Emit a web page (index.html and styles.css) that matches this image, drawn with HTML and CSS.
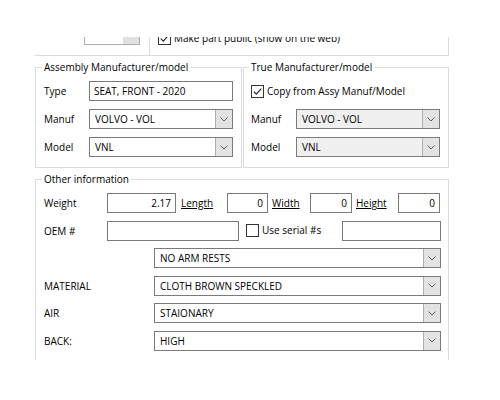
FILE: index.html
```html
<!DOCTYPE html>
<html lang="en">
<head>
    <meta charset="UTF-8">
    <meta name="viewport" content="width=device-width, initial-scale=1.0">
    <title>Part details</title>
    <link rel="stylesheet" href="styles.css">
</head>
<body>
<div class="window">

    <!-- Panel atas (terpotong oleh scroll) -->
    <div class="top-panel">
        <div class="top-left">
            <div class="spin"><span class="spin-btn"></span></div>
        </div>
        <div class="top-right">
            <div class="check">
                <span class="box"><svg width="11" height="11" viewBox="0 0 11 11"><path d="M1.8 5.6 L4.3 8.1 L9.3 2.6" fill="none" stroke="#222" stroke-width="1.1"/></svg></span>
                <span>Make part public (show on the web)</span>
            </div>
        </div>
    </div>

    <div class="groups">
        <fieldset class="group group-assy">
            <legend>Assembly Manufacturer/model</legend>
            <div class="rows">
                <div class="row">
                    <span class="lbl">Type</span>
                    <div class="text">SEAT, FRONT - 2020</div>
                </div>
                <div class="row">
                    <span class="lbl">Manuf</span>
                    <div class="combo"><span class="val">VOLVO - VOL</span><span class="drop"><svg width="8" height="5" viewBox="0 0 8 5"><path d="M0.5 0.5 L4 4 L7.5 0.5" fill="none" stroke="#606060"/></svg></span></div>
                </div>
                <div class="row">
                    <span class="lbl">Model</span>
                    <div class="combo"><span class="val">VNL</span><span class="drop"><svg width="8" height="5" viewBox="0 0 8 5"><path d="M0.5 0.5 L4 4 L7.5 0.5" fill="none" stroke="#606060"/></svg></span></div>
                </div>
            </div>
        </fieldset>

        <fieldset class="group group-true">
            <legend>True Manufacturer/model</legend>
            <div class="rows">
                <div class="row">
                    <div class="check">
                        <span class="box"><svg width="11" height="11" viewBox="0 0 11 11"><path d="M1.8 5.6 L4.3 8.1 L9.3 2.6" fill="none" stroke="#222" stroke-width="1.1"/></svg></span>
                        <span>Copy from Assy Manuf/Model</span>
                    </div>
                </div>
                <div class="row">
                    <span class="lbl">Manuf</span>
                    <div class="combo disabled"><span class="val">VOLVO - VOL</span><span class="drop"><svg width="8" height="5" viewBox="0 0 8 5"><path d="M0.5 0.5 L4 4 L7.5 0.5" fill="none" stroke="#606060"/></svg></span></div>
                </div>
                <div class="row">
                    <span class="lbl">Model</span>
                    <div class="combo disabled"><span class="val">VNL</span><span class="drop"><svg width="8" height="5" viewBox="0 0 8 5"><path d="M0.5 0.5 L4 4 L7.5 0.5" fill="none" stroke="#606060"/></svg></span></div>
                </div>
            </div>
        </fieldset>
    </div>

    <fieldset class="group group-other">
        <legend>Other information</legend>
        <div class="rows rows-other">
            <div class="row">
                <span class="lbl lbl-wide">Weight</span>
                <div class="text num w-weight">2.17</div>
                <span class="link l-length">Length</span>
                <div class="text num w-length">0</div>
                <span class="link l-width">Width</span>
                <div class="text num w-dim">0</div>
                <span class="link l-height">Height</span>
                <div class="text num w-dim">0</div>
            </div>
            <div class="row">
                <span class="lbl lbl-wide">OEM #</span>
                <div class="text w-oem"></div>
                <div class="check serial">
                    <span class="box"></span>
                    <span>Use serial #s</span>
                </div>
                <div class="text w-serial"></div>
            </div>
            <div class="row">
                <span class="lbl lbl-attr"></span>
                <div class="combo"><span class="val">NO ARM RESTS</span><span class="drop"><svg width="8" height="5" viewBox="0 0 8 5"><path d="M0.5 0.5 L4 4 L7.5 0.5" fill="none" stroke="#606060"/></svg></span></div>
            </div>
            <div class="row">
                <span class="lbl lbl-attr">MATERIAL</span>
                <div class="combo"><span class="val">CLOTH BROWN SPECKLED</span><span class="drop"><svg width="8" height="5" viewBox="0 0 8 5"><path d="M0.5 0.5 L4 4 L7.5 0.5" fill="none" stroke="#606060"/></svg></span></div>
            </div>
            <div class="row">
                <span class="lbl lbl-attr">AIR</span>
                <div class="combo"><span class="val">STAIONARY</span><span class="drop"><svg width="8" height="5" viewBox="0 0 8 5"><path d="M0.5 0.5 L4 4 L7.5 0.5" fill="none" stroke="#606060"/></svg></span></div>
            </div>
            <div class="row">
                <span class="lbl lbl-attr">BACK:</span>
                <div class="combo"><span class="val">HIGH</span><span class="drop"><svg width="8" height="5" viewBox="0 0 8 5"><path d="M0.5 0.5 L4 4 L7.5 0.5" fill="none" stroke="#606060"/></svg></span></div>
            </div>
        </div>
    </fieldset>

</div>
</body>
</html>
```

FILE: styles.css
```css
* {
    margin: 0;
    padding: 0;
    box-sizing: border-box;
}

body {
    font-family: "Open Sans", "Noto Sans", sans-serif;
    font-size: 10px;
    color: #000;
    background-color: #fff;
}

.window {
    width: 414px;
    height: 360px;
    margin-left: 35px;
    padding-top: 37px;
    overflow: hidden; /* area scroll terpotong */
}

/* Panel atas */
.top-panel {
    display: flex;
    height: 19px;
    border-bottom: 1px solid #dcdcdc;
    overflow: hidden;
}

.top-left,
.top-right {
    display: flex;
    align-items: flex-end;
    padding-bottom: 10px;
    border-right: 1px solid #dcdcdc;
}

.top-left {
    width: 115px;
    justify-content: flex-end;
    padding-right: 9px;
}

.top-right {
    width: 299px;
    padding-left: 8px;
}

.spin {
    display: flex;
    justify-content: flex-end;
    width: 56px;
    height: 20px;
    flex-shrink: 0;
    border: 1px solid #adadad;
}

.spin-btn {
    width: 16px;
    background-color: #e1e1e1;
}

/* Checkbox */
.check {
    display: flex;
    align-items: center;
    gap: 3px;
    line-height: 13px;
    white-space: nowrap;
}

.box {
    display: flex;
    justify-content: center;
    align-items: center;
    width: 13px;
    height: 13px;
    border: 1px solid #333;
    background-color: #fff;
    flex-shrink: 0;
}

/* Group box */
.groups {
    display: flex;
    gap: 1px;
    margin-top: 5px;
}

.group {
    min-width: 0;
    border: 1px solid #dcdcdc;
    padding: 7px 8px 10px 8px;
}

.group legend {
    line-height: 13px;
    padding: 0 2px;
    margin-left: -2px;
}

.group-assy {
    width: 207px;
}

.group-true {
    width: 206px;
    padding-left: 7px;
}

.group-other {
    width: 414px;
    margin-top: 5px;
    padding: 7px 7px 20px 8px;
}

.rows {
    display: flex;
    flex-direction: column;
    gap: 8px;
}

.rows-other {
    gap: 7.6px;
}

.row {
    display: flex;
    align-items: center;
    height: 20px;
}

.lbl {
    width: 45px;
    flex-shrink: 0;
}

.lbl-wide {
    width: 63px;
}

.lbl-attr {
    width: 110px;
}

/* Textbox */
.text {
    height: 20px;
    width: 144px;
    border: 1px solid #7a7a7a;
    padding-left: 4px;
    line-height: 18px;
    white-space: nowrap;
    flex-shrink: 0;
}

.num {
    text-align: right;
    padding-right: 4px;
}

.w-weight { width: 69px; }
.w-length { width: 41px; }
.w-dim { width: 42px; }
.w-oem { width: 132px; }

.w-serial {
    width: 99px;
    margin-left: auto;
}

.serial {
    margin-left: 7px;
}

.link {
    text-decoration: underline;
    flex-shrink: 0;
}

.l-length { width: 46px; margin-left: 5px; }
.l-width { width: 38px; margin-left: 4px; }
.l-height { width: 42px; margin-left: 4px; }

/* Combobox */
.combo {
    display: flex;
    flex: 1;
    height: 20px;
    min-width: 0;
    border: 1px solid #7a7a7a;
    background-color: #fff;
}

.combo.disabled {
    background-color: #f0f0f0;
}

.combo .val {
    flex: 1;
    padding-left: 5px;
    line-height: 18px;
    white-space: nowrap;
}

.combo .drop {
    display: flex;
    justify-content: center;
    align-items: center;
    width: 17px;
    background-color: #e3e3e3;
    border-left: 1px solid #adadad;
}
```
